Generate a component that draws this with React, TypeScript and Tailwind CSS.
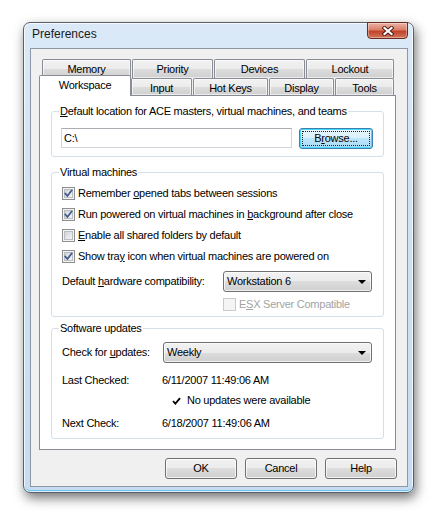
import React from "react";

function CheckBox({ checked = false, disabled = false }: { checked?: boolean; disabled?: boolean }) {
  return (
    <svg width="13" height="13" viewBox="0 0 13 13" className="shrink-0">
      <defs>
        <linearGradient id="cbg" x1="0" y1="0" x2="1" y2="1">
          <stop offset="0" stopColor="#cdd1d7" />
          <stop offset="1" stopColor="#f7f7f8" />
        </linearGradient>
      </defs>
      {disabled ? (
        <>
          <rect x="0.5" y="0.5" width="12" height="12" fill="#f4f4f4" stroke="#cacaca" />
        </>
      ) : (
        <>
          <rect x="0.5" y="0.5" width="12" height="12" fill="#f4f4f4" stroke="#8e8f8f" />
          <rect x="2.5" y="2.5" width="8" height="8" fill="url(#cbg)" stroke="#b9bcc1" />
        </>
      )}
      {checked && (
        <path d="M3.2 6.4 L5.4 9 L9.8 3.3" fill="none" stroke="#3f5a8c" strokeWidth="1.7" strokeLinecap="round" strokeLinejoin="round" />
      )}
    </svg>
  );
}

function Dropdown({ value, width }: { value: string; width: string }) {
  return (
    <div
      className={
        "h-[21px] border border-[#707070] rounded-[3px] bg-[linear-gradient(to_bottom,#f2f2f2_0%,#ebebeb_50%,#dddddd_50%,#cfcfcf_100%)] shadow-[inset_0_0_0_1px_rgba(255,255,255,0.7)] flex items-center justify-between pl-[3px] pr-[5px] " +
        width
      }
    >
      <span>{value}</span>
      <svg width="8" height="4" viewBox="0 0 8 4">
        <path d="M0 0 H8 L4 4 Z" fill="#000" />
      </svg>
    </div>
  );
}

function Group({ legend, className, children }: { legend: React.ReactNode; className: string; children: React.ReactNode }) {
  return (
    <fieldset className={"border border-[#d5dfe5] rounded-[3px] px-[10px] " + className}>
      <legend className="-ml-[3px] px-px">{legend}</legend>
      {children}
    </fieldset>
  );
}

function Tab({ label, width, row }: { label: string; width: string; row: 1 | 2 }) {
  return (
    <div
      className={
        "border border-b-0 border-[#898c95] rounded-t-[2px] bg-[linear-gradient(to_bottom,#f2f2f2_0%,#ebebeb_50%,#dddddd_50%,#cfcfcf_100%)] shadow-[inset_0_0_0_1px_rgba(255,255,255,0.6)] flex justify-center " +
        (row === 1 ? "h-[19px] items-center " : "h-[17px] items-start pt-[3px] ") +
        width
      }
    >
      {label}
    </div>
  );
}

function Button({ children, focused = false }: { children: React.ReactNode; focused?: boolean }) {
  if (focused) {
    return (
      <div className="w-[74px] h-[21px] border border-[#3c7fb1] rounded-[3px] bg-[linear-gradient(to_bottom,#eaf6fd_0%,#d9f0fc_50%,#bee6fd_50%,#a7d9f5_100%)] shadow-[inset_0_0_0_1px_#48d8fb] p-[2px]">
        <div className="w-full h-full border border-dotted border-[#222] flex items-center justify-center">{children}</div>
      </div>
    );
  }
  return (
    <div className="w-[72px] h-[21px] border border-[#707070] rounded-[3px] bg-[linear-gradient(to_bottom,#f2f2f2_0%,#ebebeb_50%,#dddddd_50%,#cfcfcf_100%)] shadow-[inset_0_0_0_1px_rgba(255,255,255,0.75)] flex items-center justify-center">
      {children}
    </div>
  );
}

export default function App() {
  return (
    <div className="w-[442px] h-[524px] bg-white pl-[23px] pt-[22px] font-['Liberation_Sans',Arial,sans-serif] text-[11px] leading-[13px] text-black tracking-[-0.25px]">
      <div className="w-[391px] h-[471px] rounded-[7px] border border-[#58606c] bg-[linear-gradient(to_bottom,#dbe9f7_0%,#d1e3f5_30%,#c6dcf2_100%)] shadow-[2px_5px_12px_rgba(0,0,0,0.55),inset_0_0_0_1px_rgba(255,255,255,0.75),inset_0_-2px_0_#6fc3ec] flex flex-col">
        {/* title bar */}
        <div className="h-[25px] flex justify-between shrink-0">
          <div className="pl-[8px] pt-[4px] text-[12px] leading-[15px] tracking-normal text-[#1b1b1b]">Preferences</div>
          <div className="w-[41px] h-[17px] -mt-px mr-[5px] rounded-b-[4px] border border-[#6b2b20] bg-[linear-gradient(to_bottom,#eab3a6_0%,#dc7f69_45%,#c2422a_55%,#d1765a_100%)] shadow-[inset_0_0_0_1px_rgba(255,255,255,0.35)] flex items-center justify-center">
            <svg width="14" height="10" viewBox="0 0 14 10">
              <path d="M3.5 2 L10.5 8 M10.5 2 L3.5 8" stroke="#4a1d14" strokeWidth="4" strokeLinecap="square" />
              <path d="M3.5 2 L10.5 8 M10.5 2 L3.5 8" stroke="#ffffff" strokeWidth="2.2" strokeLinecap="square" />
            </svg>
          </div>
        </div>

        {/* client area */}
        <div className="ml-[6px] w-[378px] h-[439px] border border-[#8d96a2] bg-[#f0f0f0] pl-[8px] pt-[10px]">
          {/* tabs */}
          <div className="flex gap-px ml-[3px]">
            <Tab row={1} label="Memory" width="w-[89px]" />
            <Tab row={1} label="Priority" width="w-[81px]" />
            <Tab row={1} label="Devices" width="w-[91px]" />
            <Tab row={1} label="Lockout" width="w-[88px]" />
          </div>
          <div className="flex items-end h-[17px]">
            <div className="relative z-10 -mb-px w-[92px] h-[21px] bg-white border border-b-0 border-[#898c95] rounded-t-[2px] flex justify-center pt-[3px]">
              Workspace
            </div>
            <div className="flex gap-px">
              <Tab row={2} label="Input" width="w-[61px]" />
              <Tab row={2} label="Hot Keys" width="w-[75px]" />
              <Tab row={2} label="Display" width="w-[65px]" />
              <Tab row={2} label="Tools" width="w-[59px]" />
            </div>
          </div>

          {/* panel */}
          <div className="w-[357px] h-[355px] border border-[#898c95] bg-white px-[11px] pt-[9px]">
            <Group
              className="pt-[10px] pb-[7px]"
              legend={
                <>
                  <u>D</u>efault location for ACE masters, virtual machines, and teams
                </>
              }
            >
              <div className="flex items-start">
                <div className="-ml-px w-[231px] h-[20px] border border-[#d0d5db] border-t-[#abadb3] bg-white flex items-center pl-[2px]">
                  {"C:\\"}
                </div>
                <div className="ml-[7px]">
                  <Button focused>
                    B<u>r</u>owse...
                  </Button>
                </div>
              </div>
            </Group>

            <Group className="mt-[9px] pt-[4px] pb-[5px]" legend="Virtual machines">
              <div className="flex items-center h-[21px] gap-[3px]">
                <CheckBox checked />
                <span>
                  Remember <u>o</u>pened tabs between sessions
                </span>
              </div>
              <div className="flex items-center h-[21px] gap-[3px]">
                <CheckBox checked />
                <span>
                  Run powered on virtual machines in <u>b</u>ackground after close
                </span>
              </div>
              <div className="flex items-center h-[21px] gap-[3px]">
                <CheckBox />
                <span>
                  <u>E</u>nable all shared folders by default
                </span>
              </div>
              <div className="flex items-center h-[21px] gap-[3px]">
                <CheckBox checked />
                <span>
                  Show tra<u>y</u> icon when virtual machines are powered on
                </span>
              </div>
              <div className="mt-[4px] flex items-center">
                <span className="w-[161px]">
                  Default <u>h</u>ardware compatibility:
                </span>
                <Dropdown value="Workstation 6" width="w-[149px]" />
              </div>
              <div className="mt-[6px] pl-[161px] flex items-center gap-[3px] h-[13px] text-[#a3a3a3]">
                <CheckBox disabled />
                <span>
                  E<u>S</u>X Server Compatible
                </span>
              </div>
            </Group>

            <Group className="mt-[5px] pt-[7px] pb-[8px]" legend="Software updates">
              <div className="flex items-center">
                <span className="w-[101px]">
                  Check for <u>u</u>pdates:
                </span>
                <Dropdown value="Weekly" width="w-[209px]" />
              </div>
              <div className="mt-[11px] flex h-[13px]">
                <span className="w-[100px]">Last Checked:</span>
                <span>6/11/2007 11:49:06 AM</span>
              </div>
              <div className="mt-[7px] flex items-center h-[13px] pl-[110px] gap-[6px]">
                <svg width="9" height="8" viewBox="0 0 9 8">
                  <path d="M1 4.2 L3.4 6.6 L8 1.2" fill="none" stroke="#000" strokeWidth="1.8" />
                </svg>
                <span>No updates were available</span>
              </div>
              <div className="mt-[10px] flex h-[13px]">
                <span className="w-[100px]">Next Check:</span>
                <span>6/18/2007 11:49:06 AM</span>
              </div>
            </Group>
          </div>

          {/* buttons */}
          <div className="mt-[8px] w-[358px] flex justify-end gap-[8px]">
            <Button>OK</Button>
            <Button>Cancel</Button>
            <Button>Help</Button>
          </div>
        </div>
      </div>
    </div>
  );
}
